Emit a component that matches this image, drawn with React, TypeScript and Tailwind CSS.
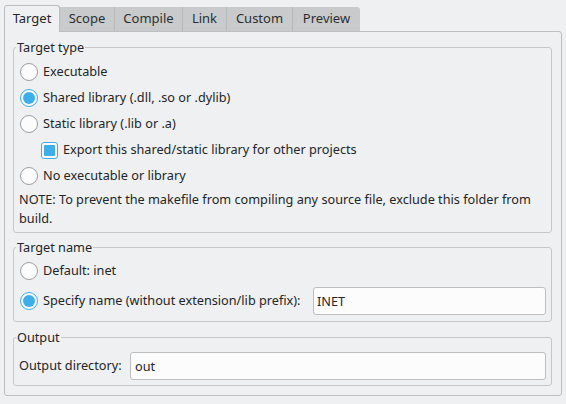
import React from "react";

const tabs = [
  { label: "Target", w: "w-[56px]" },
  { label: "Scope", w: "w-[55px]" },
  { label: "Compile", w: "w-[68px]" },
  { label: "Link", w: "w-[44px]" },
  { label: "Custom", w: "w-[66px]" },
  { label: "Preview", w: "w-[67px]" },
];

function Radio({ checked }: { checked?: boolean }) {
  return (
    <span
      className={`flex h-[18px] w-[18px] shrink-0 items-center justify-center rounded-full border bg-[#fcfcfc] ${
        checked ? "border-[#3daee9]" : "border-[#9c9ea0]"
      }`}
    >
      {checked && <span className="h-[12px] w-[12px] rounded-full bg-[#3daee9]" />}
    </span>
  );
}

function Checkbox() {
  return (
    <span className="flex h-[17px] w-[17px] shrink-0 items-center justify-center rounded-[3px] border border-[#3daee9] bg-[#fcfcfc]">
      <span className="h-[11px] w-[11px] rounded-[1px] bg-[#3daee9]" />
    </span>
  );
}

function Group({ title, className, children }: { title: string; className?: string; children: React.ReactNode }) {
  return (
    <fieldset className={`rounded-[3px] border border-[#c5c7c9] ${className ?? ""}`}>
      <legend className="ml-[2px] px-[1px] leading-[18px]">{title}</legend>
      {children}
    </fieldset>
  );
}

export default function App() {
  return (
    <div className="h-[404px] w-[566px] overflow-hidden bg-[#eff0f1] font-['Noto_Sans',sans-serif] text-[12.7px] text-[#232629]">
      {/* tab bar */}
      <div className="flex h-[31px] items-end pl-[4px] text-[13px]">
        {tabs.map((t, i) =>
          i === 0 ? (
            <div
              key={t.label}
              className={`relative z-10 -mb-px flex h-[27px] ${t.w} items-center justify-center rounded-t-[3px] border-x border-t border-[#bcbec0] bg-[#eff0f1]`}
            >
              {t.label}
            </div>
          ) : (
            <div
              key={t.label}
              className={`flex h-[24px] ${t.w} items-center justify-center bg-[#c9cacc] text-[#2b2f33] ${
                i < tabs.length - 1 ? "border-r border-[#b7b9bb]" : "rounded-tr-[3px]"
              }`}
            >
              {t.label}
            </div>
          )
        )}
      </div>

      {/* pane */}
      <div className="ml-[4px] w-[558px] rounded-b-[3px] rounded-tr-[3px] border border-[#bcbec0] pb-[9px] pl-[8px] pr-[9px] pt-[6px]">
        <Group title="Target type" className="pb-[4px]">
          <div className="flex flex-col pt-[3px]">
            <label className="flex h-[26px] items-center gap-[5px] pl-[6px]">
              <Radio /> Executable
            </label>
            <label className="flex h-[26px] items-center gap-[5px] pl-[6px]">
              <Radio checked /> Shared library (.dll, .so or .dylib)
            </label>
            <label className="flex h-[26px] items-center gap-[5px] pl-[6px]">
              <Radio /> Static library (.lib or .a)
            </label>
            <label className="flex h-[26px] items-center gap-[5px] pl-[27px]">
              <Checkbox /> Export this shared/static library for other projects
            </label>
            <label className="flex h-[26px] items-center gap-[5px] pl-[6px]">
              <Radio /> No executable or library
            </label>
            <p className="mt-[1px] pl-[5px] leading-[19px]">
              NOTE: To prevent the makefile from compiling any source file, exclude this folder from
              <br />
              build.
            </p>
          </div>
        </Group>

        <Group title="Target name" className="mt-[5px] pb-[6px]">
          <div className="flex flex-col pt-[2px]">
            <label className="flex h-[26px] items-center gap-[5px] pl-[6px]">
              <Radio /> Default: inet
            </label>
            <div className="mt-[3px] flex h-[28px] items-center pl-[6px] pr-[5px]">
              <label className="flex items-center gap-[5px]">
                <Radio checked /> Specify name (without extension/lib prefix):
              </label>
              <input
                readOnly
                value="INET"
                className="ml-auto h-[28px] w-[233px] rounded-[3px] border border-[#bcbec0] bg-[#fcfcfc] pl-[3px] outline-none"
              />
            </div>
          </div>
        </Group>

        <Group title="Output" className="mt-[6px] pb-[5px]">
          <div className="mt-[6px] flex h-[28px] items-center pl-[5px] pr-[5px]">
            <span>Output directory:</span>
            <input
              readOnly
              value="out"
              className="ml-auto h-[28px] w-[416px] rounded-[3px] border border-[#bcbec0] bg-[#fcfcfc] pl-[4px] outline-none"
            />
          </div>
        </Group>
      </div>
    </div>
  );
}
